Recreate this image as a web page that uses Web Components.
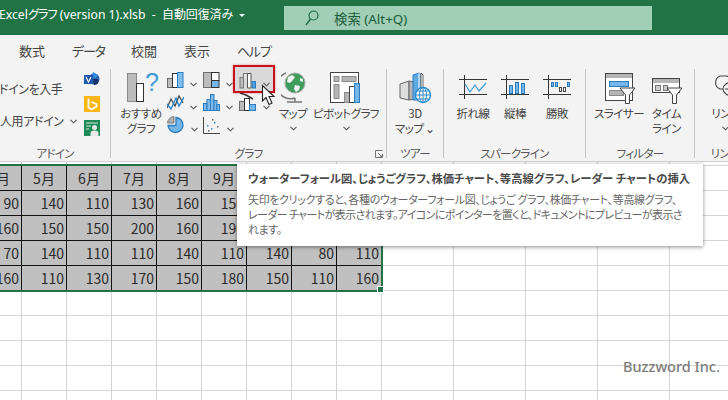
<!DOCTYPE html>
<html lang="ja"><head><meta charset="utf-8">
<style>
html,body{margin:0;padding:0;width:728px;height:400px;overflow:hidden;background:#fff}
body{font-family:"Noto Sans CJK JP","Noto Sans",sans-serif;font-feature-settings:"palt";color:#444}
svg{display:block}
</style></head><body>
<x-app>
<x-titlebar></x-titlebar>
<x-tabs></x-tabs>
<x-ribbon>
  <x-group w="111" pad="0" label="アドイン">
    <x-addins></x-addins>
  </x-group>
  <x-group w="276" pad="5" label="グラフ" launcher>
    <x-big w="50" l1="おすすめ" l2="グラフ"><svg width="34" height="32" viewBox="0 0 34 32" style="margin-left:4px;overflow:visible"><rect x="1.500" y="1.500" width="9" height="28" fill="#bcbcbc" stroke="#8a8a8a"/><rect x="10.500" y="11.500" width="7" height="18" fill="#fff" stroke="#333"/><text x="19" y="19" font-family="Liberation Sans" font-size="25" fill="#3f9bd8">?</text></svg></x-big>
    <x-smallgrid>
      <x-small><svg width="17" height="17" viewBox="0 0 17 17"><rect x=".5" y="6.500" width="5" height="9" fill="#bcbcbc" stroke="#6c6c6c"/><rect x="5.500" y="1.500" width="5" height="14" fill="#fff" stroke="#333"/><rect x="10.500" y=".5" width="5.500" height="15" fill="#84bdec" stroke="#2b7cbf"/></svg></x-small>
      <x-small><svg width="17" height="17" viewBox="0 0 17 17"><rect x=".5" y=".5" width="8" height="15" fill="#bcbcbc" stroke="#6c6c6c"/><rect x="8.500" y=".5" width="7.500" height="8" fill="#fff" stroke="#333"/><rect x="8.500" y="8.500" width="7.500" height="7" fill="#74b5ea" stroke="#333"/></svg></x-small>
      <x-small active><svg width="18" height="17" viewBox="0 0 18 17"><rect x="1" y="5.500" width="3.500" height="10.500" fill="#bcbcbc" stroke="#777"/><path d="M4.500 5.500V1.500H8.500V5.500" fill="#e8e8e8" stroke="#777" stroke-width="1.100"/><path d="M8.500 1.500H12V16H8.500Z" fill="#fff" stroke="#555"/><rect x="13" y="9.500" width="3.500" height="6.500" fill="#4d9fe0" stroke="#2b7cbf"/></svg></x-small>
      <x-small><svg width="17" height="17" viewBox="0 0 17 17"><path d="M0 14L4 5l4 7 4-10 4 7" fill="none" stroke="#444" stroke-width="1.200"/><path d="M0 10l4 5 5-11 3 8 5-9" fill="none" stroke="#2b88cc" stroke-width="1.400"/></svg></x-small>
      <x-small><svg width="17" height="17" viewBox="0 0 17 17"><g fill="#7cbaec" stroke="#2b7cbf"><rect x=".5" y="9.500" width="3.500" height="7"/><rect x="4" y="5.500" width="3.500" height="11"/><rect x="7.500" y=".5" width="3.500" height="16"/><rect x="11" y="6.500" width="3" height="10"/><rect x="14" y="10.500" width="2.500" height="6"/></g></svg></x-small>
      <x-small><svg width="18" height="19" viewBox="0 0 18 19" style="margin-top:-1px"><path d="M1 0l6 2 7 4" fill="none" stroke="#333" stroke-width="1.500"/><rect x=".5" y="8.500" width="5" height="9" fill="#bcbcbc" stroke="#6c6c6c"/><rect x="5.500" y="5.500" width="5" height="12" fill="#fff" stroke="#333"/><rect x="10.500" y="11.500" width="6" height="6" fill="#74b5ea" stroke="#2b7cbf"/></svg></x-small>
      <x-small><svg width="18" height="18" viewBox="0 0 18 18"><path d="M7 .5A7 7 0 0 0 .5 7H7Z" fill="#b0b0b0" stroke="#7a7a7a"/><path d="M9 1.500a7.500 7.500 0 1 1-8 8h8Z" fill="#74b5ea" stroke="#2b7cbf" stroke-width="1.300"/></svg></x-small>
      <x-small><svg width="18" height="17" viewBox="0 0 18 17"><path d="M.5 0V16.500H17" fill="none" stroke="#444"/><g fill="#3b96d8"><rect x="4" y="8" width="1.500" height="1.500"/><rect x="8" y="11" width="1.500" height="1.500"/><rect x="11" y="5" width="1.500" height="1.500"/></g><g fill="#666"><rect x="5" y="13" width="1.500" height="1.500"/><rect x="9" y="2" width="1.500" height="1.500"/><rect x="14" y="9" width="1.500" height="1.500"/></g></svg></x-small>
    </x-smallgrid>
    <x-big w="36" l1="マップ" chev="below"><svg width="25" height="32" viewBox="0 0 25 32"><path d="M5 1a13 13 0 0 0 9 25" fill="none" stroke="#777" stroke-width="1.500"/><circle cx="14" cy="11" r="10" fill="#3f9d5b" stroke="#a8a8a8"/><path d="M7 5l4-2 3 2-2 3-3 3-3-1ZM14 13l5 1-1 4-3 2-2-3ZM19 6l3 1 0 3-3-1Z" fill="#f3f3f3"/><path d="M6 30H21M14 26V30" stroke="#777" stroke-width="1.500"/></svg></x-big>
    <x-big w="70" l1="ピボットグラフ" chev="below"><svg width="32" height="32" viewBox="0 0 32 32"><rect x=".5" y=".5" width="28" height="30" fill="#fff" stroke="#444"/><g fill="#b5b5b5" stroke="#8a8a8a"><rect x="4" y="4.500" width="5" height="5"/><rect x="12" y="4.500" width="14" height="5"/><rect x="4" y="12.500" width="5" height="14"/><rect x="14.500" y="20.500" width="5" height="10"/></g><rect x="19.500" y="14.500" width="5" height="16" fill="#fff" stroke="#444"/><rect x="24.500" y="11.500" width="5" height="19" fill="#74b5ea" stroke="#2b7cbf"/></svg></x-big>
  </x-group>
  <x-group w="57" pad="0" label="ツアー">
    <x-big w="56" l1="3D" l2="マップ ⌄"><svg width="32" height="32" viewBox="0 0 32 32"><path d="M1 12l9-3v19l-9-2Z" fill="#ddd" stroke="#666"/><path d="M10 9l6 1v17l-6 1Z" fill="#b5b5b5" stroke="#666"/><path d="M14 3l6-2 3 2v25h-9Z" fill="#5fa9e3" stroke="#2b7cbf"/><path d="M20 1v27" stroke="#fff"/><path d="M22 1l2 2v23h-2Z" fill="#fff" stroke="#666"/><circle cx="24" cy="23" r="7.500" fill="#fff" stroke="#2b88cc" stroke-width="1.300"/><path d="M16.500 23H31.500M24 15.500V30.500M18 19h12M18 27h12" stroke="#2b88cc"/><ellipse cx="24" cy="23" rx="3.500" ry="7.500" fill="none" stroke="#2b88cc"/></svg></x-big>
  </x-group>
  <x-group w="142" pad="8" label="スパークライン">
    <x-big w="42" l1="折れ線"><svg width="29" height="25" viewBox="0 0 29 25" style="margin-top:3px"><path d="M0 4.500H28M0 19.500H28M5.500 0V24" stroke="#333" fill="none"/><path d="M6 9l5 8 5-7 4 6 7-8" fill="none" stroke="#3d9ad6" stroke-width="1.200"/></svg></x-big>
    <x-big w="42" l1="縦棒"><svg width="29" height="25" viewBox="0 0 29 25" style="margin-top:3px"><path d="M0 4.500H28M0 19.500H28M5.500 0V24" stroke="#333" fill="none"/><g fill="#74b5ea" stroke="#2b7cbf"><rect x="8.500" y="10.500" width="3" height="8"/><rect x="14.500" y="7.500" width="3" height="11"/><rect x="20.500" y="8.500" width="3" height="10"/></g></svg></x-big>
    <x-big w="42" l1="勝敗"><svg width="29" height="25" viewBox="0 0 29 25" style="margin-top:3px"><path d="M0 4.500H28M0 19.500H28M5.500 0V24" stroke="#333" fill="none"/><g fill="#74b5ea" stroke="#2b7cbf"><rect x="8.500" y="7.500" width="2" height="4"/><rect x="12.500" y="7.500" width="2" height="4"/><rect x="24.500" y="7.500" width="2" height="4"/></g><g fill="#fff" stroke="#444"><rect x="16.500" y="12.500" width="2" height="4"/><rect x="20.500" y="12.500" width="2" height="4"/></g></svg></x-big>
  </x-group>
  <x-group w="109" pad="9" label="フィルター">
    <x-big w="48" l1="スライサー"><svg width="32" height="32" viewBox="0 0 32 32" style="margin:1px 0 0 4px"><rect x=".5" y=".5" width="27" height="27" fill="#fff" stroke="#444"/><rect x="1" y="1" width="26" height="4" fill="#b5b5b5"/><rect x="4.500" y="8.500" width="19" height="5" fill="#74b5ea" stroke="#2b7cbf"/><rect x="4.500" y="17.500" width="14" height="5" fill="#b5b5b5" stroke="#8a8a8a"/><path d="M15 15H30L24.500 22V30.500H20.500V22Z" fill="#fff" stroke="#444"/></svg></x-big>
    <x-big w="47" l1="タイム" l2="ライン"><svg width="31" height="26" viewBox="0 0 31 26" style="margin:6px 0 0 2px"><rect x=".5" y=".5" width="27" height="14" fill="#fff" stroke="#444"/><rect x="1" y="1" width="26" height="4" fill="#b5b5b5"/><g fill="#ccc" stroke="#777"><rect x="3.500" y="7.500" width="5" height="5"/><rect x="11.500" y="7.500" width="4" height="5"/></g><path d="M15 10H30L24.500 17V25.500H20.500V17Z" fill="#fff" stroke="#444"/></svg></x-big>
  </x-group>
  <x-group w="60" pad="8" label="リンク">
    <x-big w="45" l1="リンク" chev="below"><svg width="34" height="24" viewBox="0 0 34 24" style="margin:2px 0 0 5px"><path d="M9 2h6a7 7 0 0 1 6 4M9 2a7 7 0 0 0 0 13h3" fill="none" stroke="#444" stroke-width="1.100"/><ellipse cx="22" cy="15" rx="10" ry="7" fill="none" stroke="#444" stroke-width="1.100"/><path d="M14 15H28" stroke="#444"/></svg></x-big>
  </x-group>
</x-ribbon>
<x-sheet></x-sheet>
<x-tip></x-tip>
<x-mark></x-mark>
<x-pointer></x-pointer>
</x-app>
<script>
function def(name,css,html,init){
  customElements.define(name,class extends HTMLElement{
    connectedCallback(){
      if(this.shadowRoot)return;
      const s=this.attachShadow({mode:'open'});
      s.innerHTML='<style>'+css+'</style>'+(typeof html==='function'?html(this):html);
      if(init)init(this,s);
    }
  });
}
const chev='<svg width="7" height="5" viewBox="0 0 7 5"><path d="M.5 .8L3.500 3.800 6.500 .8" fill="none" stroke="#555" stroke-width="1.100"/></svg>';
def('x-app',':host{display:flex;flex-direction:column;position:relative;width:728px;height:400px;overflow:hidden}','<slot></slot>');
def('x-titlebar',`:host{display:flex;align-items:center;height:35px;background:#217346;color:#fff;font-family:"Noto Sans","Noto Sans CJK JP",sans-serif;font-size:12.200px;box-sizing:border-box;padding:0 0 5px 0}
.t{margin-left:-1px;width:285px;flex:none;white-space:pre;display:flex;align-items:center;line-height:30px}
.c{font-size:12px;letter-spacing:-.1px}.g{letter-spacing:-1px}
.tri{margin-left:6px;width:0;height:0;border:3.500px solid transparent;border-top-color:#fff;border-bottom:0}
.s{margin-top:5px;width:368px;height:24px;background:#a0cfb5;color:#1c5c3a;display:flex;align-items:center;font-size:13.400px;padding-left:21px;box-sizing:border-box;gap:15px}`,
`<div class="t">Excel<span class="g">グラフ</span> (version 1).xlsb  -  <span class="c">自動回復済み</span><span class="tri"></span></div><div class="s"><svg width="14" height="16" viewBox="0 0 14 16"><circle cx="8.500" cy="5.500" r="4.500" fill="none" stroke="#1f6a42" stroke-width="1.200"/><path d="M5.500 9L1 15" stroke="#1f6a42" stroke-width="1.400"/></svg><span>検索 (Alt+Q)</span></div>`);
def('x-tabs',`:host{display:flex;height:30px;background:#f3f3f3;align-items:center;font-size:13px;color:#444;padding-left:19px}
span{flex:none}.k{letter-spacing:-1.200px}`,
`<span style="width:53px">数式</span><span class="k" style="width:59px">データ</span><span style="width:53px">校閲</span><span style="width:53px">表示</span><span class="k">ヘルプ</span>`);
def('x-ribbon',`:host{display:flex;height:97px;background:#f3f3f3;box-sizing:border-box;padding-top:4px;border-bottom:1px solid #cfcfcf}`,'<slot></slot>');
def('x-group',`:host{display:flex;flex-direction:column;flex:none;height:89px;box-sizing:border-box;border-right:1px solid #c4c4c4;position:relative}
.c{display:flex;height:78px;flex:none}
.l{font-size:11.500px;line-height:12px;text-align:center;color:#555;white-space:nowrap;letter-spacing:-.7px}`,
h=>`<style>:host{width:${h.getAttribute('w')}px}.c{padding-left:${h.getAttribute('pad')}px}</style><div class="c"><slot></slot></div><div class="l">${h.getAttribute('label')}</div>`+(h.hasAttribute('launcher')?'<svg viewBox="0 0 8 8" style="position:absolute;right:3px;bottom:0;width:8px;height:8px"><path d="M.5 .5H7.500M.5 .5V7.500H7.500V4M3 3L7 7M4.500 7H7V4.500" fill="none" stroke="#666" stroke-width=".9"/></svg>':''));
def('x-big',`:host{display:flex;flex-direction:column;flex:none;align-items:center;font-size:11.500px;line-height:15px;color:#444;white-space:nowrap;text-align:center;letter-spacing:-.5px}
.i{height:37px;flex:none;display:flex;justify-content:center;align-items:flex-start;padding-top:3px;box-sizing:border-box;width:100%}
.cv{height:15px;display:flex;align-items:center;justify-content:center}`,
h=>{const w=h.getAttribute('w');return `<style>:host{width:${w}px}</style><div class="i"><slot></slot></div><div>${h.getAttribute('l1')}</div>`+(h.getAttribute('l2')?`<div>${h.getAttribute('l2')}</div>`:'')+(h.getAttribute('chev')?`<div class="cv">${chev}</div>`:'')});
def('x-smallgrid',`:host{display:grid;grid-template-columns:36px 36px 36px;grid-template-rows:repeat(3,22.500px);flex:none;margin-left:1px}`,'<slot></slot>');
def('x-small',`:host{display:flex;align-items:center;position:relative;gap:4px;height:22.500px}
.h{position:absolute;left:-6px;top:-4px;width:42px;height:28px;box-sizing:border-box;border:2px solid #c8101c;background:#d9d9d9;box-shadow:0 0 2px #e08a8a}
::slotted(svg){position:relative}.w{position:relative;margin-left:2px}`,
h=>(h.hasAttribute('active')?'<div class="h"></div>':'')+`<slot></slot><div class="w">${chev}</div>`);
def('x-addins',`:host{display:grid;grid-template-columns:78px 32px;width:110px;color:#444;font-size:12px;white-space:nowrap;letter-spacing:-.4px}
.a{overflow:hidden;display:flex;flex-direction:column;padding-top:12px}
.a div{height:16px;line-height:16px;display:flex;align-items:center}
.i{display:flex;flex-direction:column;gap:8px;padding:3px 0 0 6px}`,
`<div class="a"><div style="margin-bottom:16px;margin-left:-1px">ドインを入手</div><div><span style="width:70px;flex:none">人用アドイン</span>${chev}</div></div>
<div class="i"><svg width="16" height="16" viewBox="0 0 16 16"><circle cx="10" cy="7" r="5.500" fill="#2b5fb0"/><path d="M9 0l5 3-2 3H7Z" fill="#2e8bdc"/><path d="M10 13a4 4 0 0 0 4-6l-5 0Z" fill="#17306e"/><rect x="0" y="3" width="9" height="9" fill="#1f57ae"/><path d="M2 5l2.500 5L7 5" fill="none" stroke="#fff" stroke-width="1.200"/></svg>
<svg width="16" height="16" viewBox="0 0 16 16"><rect width="16" height="16" fill="#fdb614"/><path d="M4.500 2.500V11.500L7.500 13.500 12.500 10.500V8L7.500 6" fill="none" stroke="#fff" stroke-width="1.800"/></svg>
<svg width="16" height="16" viewBox="0 0 16 16"><rect width="16" height="16" fill="#1f8a58"/><path d="M2 3H14M2 6H7M2 9H5" stroke="#cfe8da" stroke-width="1.200"/><circle cx="10.500" cy="7.500" r="2.500" fill="#e8e8e8"/><path d="M6.500 16v-3q0-2.500 4-2.500t4 2.500v3Z" fill="#e8e8e8"/></svg></div>`);
def('x-sheet',`:host{display:grid;flex:none;grid-template-columns:repeat(9,45px) repeat(5,72px);grid-template-rows:4px repeat(10,25px);margin-left:-23px;height:238px;background:#fff;position:relative}
.g,.c{box-sizing:border-box;border-right:1px solid #d4d4d4;border-bottom:1px solid #d4d4d4}
.c{background:#c0c0c0;border-color:#111;color:#2a2a2a;font-size:14px;line-height:24px;text-align:right;padding-right:2px;overflow:hidden;white-space:nowrap}
.h{text-align:center;padding:0}
.sel{grid-column:1/10;grid-row:2/7;margin:-2px -1px -1px -2px;border:2px solid #217346;position:relative;pointer-events:none}
.sel i{position:absolute;right:-3px;bottom:-3px;width:5px;height:5px;background:#217346;border:1px solid #fff}`,'',
(h,s)=>{
 const rows=[['4月','5月','6月','7月','8月','9月','','',''],['90',140,110,130,160,150,'','',''],['160',150,150,200,160,190,'','',''],['70',140,110,110,140,110,140,80,110],['160',110,130,170,150,180,150,110,160]];
 let out='';
 for(let r=0;r<11;r++)for(let c=0;c<14;c++){
   const pos=`style="grid-row:${r+1};grid-column:${c+1}"`;
   const d=r-1;
   if(d>=0&&d<5&&c<9){out+=`<div class="c${d===0?' h':''}" ${pos}>${rows[d][c]}</div>`}
   else out+=`<div class="g" ${pos}></div>`;
 }
 out+='<div class="sel"><i></i></div>';
 s.innerHTML+=out;
});
def('x-tip',`:host{position:absolute;left:237px;top:164px;width:466px;height:82px;box-sizing:border-box;background:#fff;box-shadow:0 1px 4px rgba(0,0,0,.45);padding:7px 10px 0 11px;color:#666;font-size:11px;line-height:15px;white-space:nowrap;letter-spacing:-.5px}
.t{font-weight:700;color:#4a4a4a;font-size:11.300px;line-height:15px;margin-bottom:6px;letter-spacing:0}`,
`<div class="t">ウォーターフォール図、じょうごグラフ、株価チャート、等高線グラフ、レーダー チャートの挿入</div><div style="letter-spacing:-.35px">矢印をクリックすると、各種のウォーターフォール図、じょうご グラフ、株価チャート、等高線グラフ、</div><div style="letter-spacing:-.62px">レーダー チャートが表示されます。アイコンにポインターを置くと、ドキュメントにプレビューが表示さ</div><div>れます。</div>`);
def('x-mark',`:host{position:absolute;left:623px;top:356px;color:#777;font:500 14.500px/20px "Noto Sans",sans-serif;white-space:nowrap;opacity:.95}`,'Buzzword Inc.');
def('x-pointer',`:host{position:absolute;left:261px;top:84px;width:15px;height:22px}`,'<svg width="15" height="22" viewBox="0 0 15 22"><path d="M1.500 1.500V17L5 13.500 8 20.500 11 19 8 12.500H13Z" fill="#fff" stroke="#222" stroke-width="1.100"/></svg>');
</script>
</body></html>
